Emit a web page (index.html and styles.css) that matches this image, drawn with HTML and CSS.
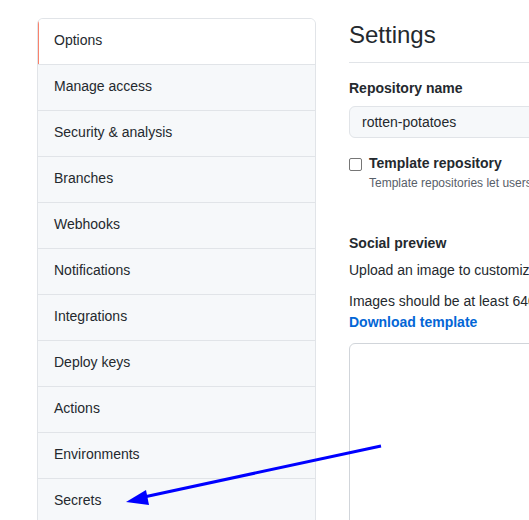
FILE: index.html
```html
<!DOCTYPE html>
<html lang="en">
<head>
<meta charset="utf-8">
<title>Settings</title>
<link rel="stylesheet" href="styles.css">
</head>
<body>
<div class="page">
  <nav class="menu">
    <a class="menu-item selected">Options</a>
    <a class="menu-item">Manage access</a>
    <a class="menu-item">Security &amp; analysis</a>
    <a class="menu-item">Branches</a>
    <a class="menu-item">Webhooks</a>
    <a class="menu-item">Notifications</a>
    <a class="menu-item">Integrations</a>
    <a class="menu-item">Deploy keys</a>
    <a class="menu-item">Actions</a>
    <a class="menu-item">Environments</a>
    <a class="menu-item">Secrets</a>
  </nav>
  <main class="main">
    <h2 class="subhead">Settings</h2>
    <label class="field-label">Repository name</label>
    <div class="form-control">rotten-potatoes</div>
    <div class="checkbox-row">
      <span class="checkbox"></span>
      <div class="checkbox-text">
        <div class="checkbox-label">Template repository</div>
        <div class="note">Template repositories let users generate new repositories with the same directory structure and files.</div>
      </div>
    </div>
    <h3 class="section-title">Social preview</h3>
    <p class="para first">Upload an image to customize your repository's social media preview.</p>
    <p class="para">Images should be at least 640×320px (1280×640px for best display).<br><a class="link">Download template</a></p>
    <div class="preview-box"></div>
  </main>
</div>
<svg class="annotation" width="529" height="520" viewBox="0 0 529 520">
  <line x1="381" y1="446" x2="144" y2="497" stroke="#0000ff" stroke-width="3"/>
  <polygon points="126,502 146,490 149,505" fill="#0000ff"/>
</svg>
</body>
</html>
```

FILE: styles.css
```css
html, body {
  margin: 0;
  padding: 0;
  background: #ffffff;
  overflow: hidden;
  height: 520px;
}

body {
  font-family: "Liberation Sans", Arial, sans-serif;
  font-size: 14px;
  line-height: 21px;
  color: #24292e;
  position: relative;
}

.page {
  display: flex;
  gap: 33px;
  padding: 18px 0 0 37px;
  width: 900px;
}

.menu {
  width: 279px;
  flex: none;
  box-sizing: border-box;
  border: 1px solid #e1e4e8;
  border-radius: 6px 6px 0 0;
  background: #f6f8fa;
  display: flex;
  flex-direction: column;
  overflow: hidden;
}

.menu-item {
  display: block;
  padding: 11px 16px 13px;
  border-bottom: 1px solid #e1e4e8;
  color: #24292e;
  position: relative;
}

.menu-item.selected {
  background: #ffffff;
}

.menu-item.selected::before {
  content: "";
  position: absolute;
  left: -1px;
  top: -1px;
  bottom: 0;
  width: 2px;
  background: #f9826c;
}

.main {
  width: 440px;
  flex: none;
}

.subhead {
  margin: 0 0 15px;
  padding-bottom: 11px;
  border-bottom: 1px solid #e1e4e8;
  font-size: 24px;
  line-height: 33px;
  font-weight: 400;
}

.field-label {
  display: block;
  font-weight: 700;
  margin-bottom: 7px;
}

.form-control {
  box-sizing: border-box;
  height: 32px;
  padding: 5px 12px;
  line-height: 20px;
  background: #f6f8fa;
  border: 1px solid #e1e4e8;
  border-radius: 6px;
  width: 100%;
}

.checkbox-row {
  display: flex;
  gap: 7px;
  margin-top: 15px;
}

.checkbox {
  flex: none;
  width: 13px;
  height: 13px;
  box-sizing: border-box;
  border: 1px solid #767676;
  border-radius: 2px;
  margin-top: 5px;
}

.checkbox-label {
  font-weight: 700;
}

.note {
  font-size: 12px;
  line-height: 18px;
  color: #586069;
  white-space: nowrap;
}

.section-title {
  margin: 41px 0 6px;
  font-size: 14px;
  line-height: 21px;
  font-weight: 700;
}

.para {
  margin: 0 0 10px;
  white-space: nowrap;
}

.link {
  color: #0366d6;
  font-weight: 700;
}

.preview-box {
  height: 300px;
  border: 1px solid #d1d5da;
  border-radius: 6px;
}

.annotation {
  position: absolute;
  left: 0;
  top: 0;
  pointer-events: none;
}
```
